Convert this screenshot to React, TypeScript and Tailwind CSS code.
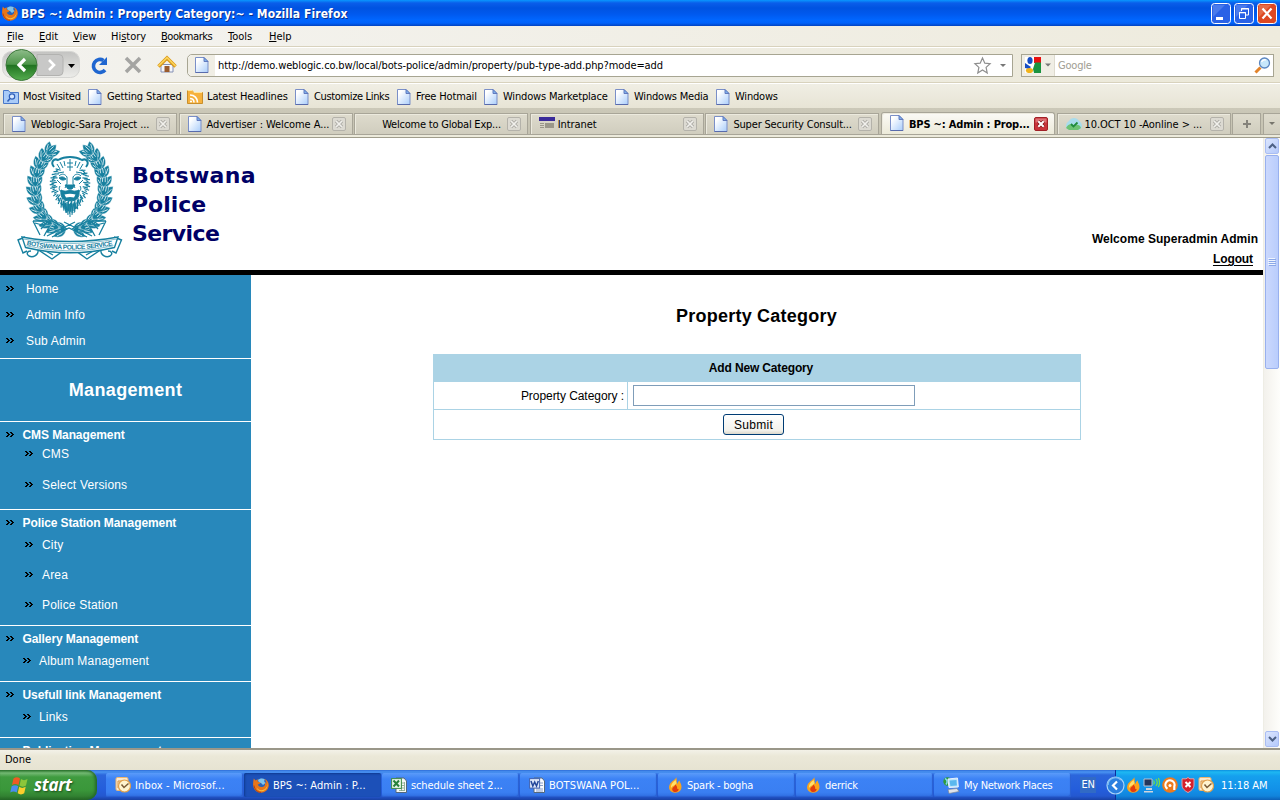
import React from 'react';

type Kids = { children?: React.ReactNode };

const tahoma = "font-['DejaVu_Sans_Condensed','DejaVu_Sans',sans-serif]";

/* ---------- icons ---------- */

function PageIcon() {
  return (
    <svg className="block shrink-0" width="14" height="17" viewBox="0 0 14 17">
      <defs>
        <linearGradient id="pg" x1="0" y1="0" x2="1" y2="1">
          <stop offset="0.2" stopColor="#ffffff" />
          <stop offset="1" stopColor="#a9cdfb" />
        </linearGradient>
      </defs>
      <path d="M.5 .5h8.500l4 4v11H.5z" fill="url(#pg)" stroke="#7a8fc8" />
      <path d="M9 .5v4h4z" fill="#7fb2ee" stroke="#5a72b8" strokeWidth=".9" />
      <path d="M.5 15.500h12.600" stroke="#5566a8" strokeWidth=".9" />
    </svg>
  );
}

function FirefoxIcon() {
  return (
    <svg className="block shrink-0" width="16" height="16" viewBox="0 0 16 16">
      <circle cx="8.400" cy="7" r="6" fill="#2a63b8" />
      <path d="M5 3c2-2 5-2 7-.5l-1 1.500 1.500 2L10 8 8 6 6 6z" fill="#7fc4ee" />
      <path d="M.8 1.500 2.500 3.500 4.600 2.200 4.800 4.800 7.600 5.600 6.400 7 4.800 7.600C5.500 10 8 10.800 10.800 9.400c1.400-.8 1.600-2.600.9-4.200 1 .4 1.400 1 1.600 1.800.2-1.900-.5-3.600-2-5C14 2.800 16 5.400 15.800 8.600 15.400 13 12 15.800 8 15.800S.4 12.700.1 8C0 5.800.3 3.500.8 1.500z" fill="#e8751a" />
      <path d="M13.600 4c1.500 3.500.6 7-2.600 8.600-3 1.300-6 .3-7.500-2 1 3.200 4 4.300 6.800 3.400C14.500 12.600 15.500 8 13.600 4z" fill="#f9c23c" />
      <path d="M1 8.500C1.500 12.500 4.500 15.300 8 15.400" stroke="#b8400c" fill="none" />
    </svg>
  );
}

function FlameIcon() {
  return (
    <svg className="block shrink-0" width="16" height="16" viewBox="0 0 16 16">
      <path d="M9 0C9.500 2.500 4 4 2.500 8 1 12 3.500 15.600 8 15.700c4.500 0 7-3.200 6.400-7C14 6 12.500 5.500 12.800 3.500 11 4.500 10.500 6 10.600 7 9 5.500 10.500 2.500 9 0z" fill="#fba31c" />
      <path d="M8.500 3C5 6 3.500 8 4 11c2-3 5-3 5.500-5z" fill="#ffe06a" />
      <path d="M8 7.500c.6 2-3 2.500-2.800 5C5.500 14.500 7 15 8.300 15c2.200 0 3.600-1.400 3.300-3.300-.8.400-1.200.3-1.500-.2C10.500 10 9.500 8.500 8 7.500z" fill="#e23c0e" />
    </svg>
  );
}

function OutlookIcon() {
  return (
    <svg className="block shrink-0" width="16" height="16" viewBox="0 0 16 16">
      <rect x="1" y=".5" width="12" height="13" rx="1.500" fill="#fbe9cf" stroke="#f2b66c" />
      <path d="M3 4h8M3 11V4" stroke="#d89240" fill="none" />
      <circle cx="9.500" cy="9" r="6" fill="#fff3cf" stroke="#e0a04c" strokeWidth="1.200" />
      <path d="M6.500 7.500 9 10.500l4.500-4" stroke="#7a5a36" strokeWidth="1.500" fill="none" />
    </svg>
  );
}

function ExcelIcon() {
  return (
    <svg className="block shrink-0" width="16" height="16" viewBox="0 0 16 16">
      <path d="M5 1h8l2.500 3v11.500H5z" fill="#f5f8f5" stroke="#54687c" />
      <path d="M8 6h5M8 8.500h5M8 11h5M8 13.500h5M10.500 5v9M13.500 5v9" stroke="#7ea084" strokeWidth=".8" />
      <rect x=".6" y="1.600" width="9.800" height="9.800" fill="#e9f6e9" stroke="#408b48" />
      <path d="M2.500 3.500 8 9.500M8 3.500l-5.500 6" stroke="#26813a" strokeWidth="2" />
    </svg>
  );
}

function WordIcon() {
  return (
    <svg className="block shrink-0" width="16" height="16" viewBox="0 0 16 16">
      <path d="M5 1h8l2.500 3v11.500H5z" fill="#f8faff" stroke="#54687c" />
      <path d="M11 6h3M11 8.500h3M7 12h7M7 14h7" stroke="#8aa0c8" />
      <rect x=".6" y="1.600" width="10" height="9.500" fill="#dfe8fa" stroke="#4163b0" />
      <path d="M2 4l1.800 5L5.700 5l1.800 4L9.300 4" stroke="#24489a" strokeWidth="1.500" fill="none" />
    </svg>
  );
}

function NetworkIcon() {
  return (
    <svg className="block shrink-0" width="17" height="17" viewBox="0 0 17 17">
      <circle cx="4.500" cy="4.500" r="4.200" fill="#2f9a3c" />
      <path d="M2 1.500c2 1 3 3 1 6" stroke="#7fd3f3" strokeWidth="1.500" fill="none" />
      <path d="M5 2l9.500-1 .8 9L6 10.500z" fill="#bfe6fb" stroke="#e8f2ff" />
      <path d="M6.500 3.500 13.500 3l.4 5.500-6.500.5z" fill="#5bb8ee" />
      <path d="M5 12.500 14 11.500l2 3-10 2z" fill="#dfe3ea" stroke="#7d8796" strokeWidth=".7" />
    </svg>
  );
}

function CloseTab({ active }: { active?: boolean }) {
  return active ? (
    <svg className="block shrink-0" width="14" height="14" viewBox="0 0 14 14">
      <rect x=".5" y=".5" width="13" height="13" rx="1.500" fill="#c9343a" stroke="#a02026" />
      <path d="M1.500 1.500h11v4h-11z" fill="#e58a8c" opacity=".7" />
      <path d="M4.300 4.300l5.400 5.400M9.700 4.300 4.300 9.700" stroke="#7c1014" strokeWidth="3.400" />
      <path d="M4.300 4.300l5.400 5.400M9.700 4.300 4.300 9.700" stroke="#fff" strokeWidth="2" />
    </svg>
  ) : (
    <svg className="block shrink-0" width="14" height="14" viewBox="0 0 14 14">
      <rect x=".5" y=".5" width="13" height="13" rx="1.500" fill="#dcdad2" stroke="#b4b2aa" />
      <path d="M4 4l6 6M10 4l-6 6" stroke="#aeaca6" strokeWidth="3.200" />
      <path d="M4 4l6 6M10 4l-6 6" stroke="#f1f0ec" strokeWidth="1.700" />
    </svg>
  );
}

function Chevrons() {
  return (
    <svg className="block shrink-0" width="9" height="6" viewBox="0 0 9 6">
      <path d="M0 0h2v1h1v1h1v1h-1v1h-1v1h-2v-1h1v-1h1v-1h-1v-1h-1zM4 0h2v1h1v1h1v1h-1v1h-1v1h-2v-1h1v-1h1v-1h-1v-1h-1z" fill="#000" />
    </svg>
  );
}

/* ---------- crest ---------- */

const teal = '#17809f';

function Crest() {
  const leaves: { x: number; y: number; r: number }[] = [];
  for (let a = 96; a <= 238; a += 12) {
    const rad = (a * Math.PI) / 180;
    const x = 69.5 + Math.cos(rad) * 34;
    const y = 187 + Math.sin(rad) * 43;
    leaves.push({ x, y, r: a + 90 - 36 });
    leaves.push({ x, y, r: a + 90 + 26 });
    leaves.push({ x, y, r: a + 90 - 5 });
  }
  const branch = leaves.map((l, i) => (
    <g key={i} transform={`translate(${l.x} ${l.y}) rotate(${l.r})`}>
      <path d="M0 0C4-5 9-4.600 14 0 9 4.600 4 5 0 0z" fill={teal} stroke="#fff" strokeWidth=".4" />
      <path d="M5-1.300 11-.8M5 1.500 9 1.600" stroke="#e4f2f6" strokeWidth=".8" />
    </g>
  ));
  const mane = Array.from({ length: 58 }, (_, i) => {
    const t = (i / 57) * Math.PI * 1.5 - Math.PI * 0.25;
    const c = Math.cos(t);
    const s = Math.sin(t);
    const inner = 13 + (i % 3) * 1.4;
    const drop = s > 0 ? s * s * 12 : 0;
    const outer = 18.5 + (i % 2) * 1.8 - drop * 0.3;
    return `M${70 + c * inner} ${183 + s * (inner + 5)}L${70 + c * outer} ${184 + s * (outer + 1 + drop)}`;
  }).join('');
  return (
    <svg className="block shrink-0" width="112" height="124" viewBox="14 140 112 124">
      <g>{branch}</g>
      <g transform="translate(139 0) scale(-1 1)">{branch}</g>
      <g stroke={teal} fill="none">
        <path d="M70 158c13 0 20 8 20 21 0 18-9 30-20 40-11-10-20-22-20-40 0-13 7-21 20-21z" fill="#fff" stroke="none" />
        <path d="M54 167c-4-5 0-9 4-7 7-4 17-4 24 0 4-2 8 2 4 7" strokeWidth="2" />
        <path d={mane} strokeWidth="1.200" />
        <path d="M57 164l3 5M60 162l3 6M64 161l1 5M76 161l-1 5M80 162l-3 6M83 164l-3 5M70 159v12M67 163h6M67 167h6" />
        <path d="M59 176c3-3 6-2 8 1v7l-2 4M81 176c-3-3-6-2-8 1v7l2 4M60 186c-2 3 0 6 3 6M80 186c2 3 0 6-3 6M57 180l4 4M83 180l-4 4M58 173l6-1M82 173l-6-1" />
        <path d="M59 178c3-2 5-1 7 1-3 2-5 1-7-1zM81 178c-3-2-5-1-7 1 3 2 5 1 7-1zM65 185h10l-3 4h-4zM61 190c5 2 5 1 9 0 4 1 4 2 9 0 1 8-3 11-9 11s-10-3-9-11z" fill={teal} />
        <path d="M64.500 194.500q5.500-1.500 11 0l-1.500 3q-4-1-8 0z" fill="#fff" stroke="none" />
        <path d="M61 200l3 9M64 203l2 10M67 204l1 11M70 204v13M73 204l-1 11M76 203l-2 10M79 200l-3 9" />
      </g>
      <g stroke={teal} strokeWidth="1.300" fill="none">
        <path d="M33 221h19l15 8M33 221l7 14M35 223l14 4-5 9M106 221H88l-16 8M106 221l-7 14M104 223l-14 4 5 9M47 236l28-14M92 236 64 222M52 237l17-9 18 9M41 229l7-8M98 229l-7-8" />
      </g>
      <g stroke={teal} strokeWidth="1.400" fill="#fff">
        <path d="M37 249l15 10 11-8M102 249l-15 10-11-8M42 249l11 6M97 249l-11 6" />
        <path d="M24 249c2-5 13-5 14 1 1 5-5 8-9 6-3-2-2-5 2-5M115 249c-2-5-13-5-14 1-1 5 5 8 9 6 3-2 2-5-2-5" />
        <path d="M25 237l-7 3 5 13 4-2M114 237l7.500 3-5.500 13-4-2" />
        <path d="M22 237Q70 246 118 237L114.500 247.500Q70 258 25.500 247.500Z" />
        <path d="M23 239Q70 248.300 117 239M26 245.800Q70 256 113.500 245.800" fill="none" strokeWidth=".5" />
      </g>
      <path id="ribbon" d="M25.500 244.700Q70 254.200 114.500 244.700" fill="none" />
      <text className="font-['Liberation_Sans',sans-serif] font-bold" fontSize="6.600" fill={teal}>
        <textPath href="#ribbon" startOffset="1" textLength="87" lengthAdjust="spacing">BOTSWANA POLICE SERVICE</textPath>
      </text>
    </svg>
  );
}

/* ---------- browser chrome ---------- */

function TitleBar() {
  return (
    <div className="flex h-[26px] shrink-0 items-center bg-[linear-gradient(#0997ff_0px,#0a5eea_3px,#0053e1_8px,#0059ee_14px,#0066ff_20px,#0162fb_23px,#0243c0_26px)] pl-[2px] pr-[3px]">
      <FirefoxIcon />
      <span className="ml-[3px] mt-px whitespace-nowrap font-['DejaVu_Sans_Condensed',sans-serif] text-[12px] font-bold tracking-[0.080px] text-white [text-shadow:1px_1px_#0a2f8c]">
        BPS ~: Admin : Property Category:~ - Mozilla Firefox
      </span>
      <div className="ml-auto flex gap-[3px]">
        <svg width="20" height="21" viewBox="0 0 20 21">
          <rect x=".5" y=".5" width="19" height="20" rx="3" fill="#2a62e6" stroke="#fff" />
          <path d="M2 2h12L2 14z" fill="#7ba2f5" opacity=".4" />
          <path d="M5 14h7v3H5z" fill="#fff" />
        </svg>
        <svg width="20" height="21" viewBox="0 0 20 21">
          <rect x=".5" y=".5" width="19" height="20" rx="3" fill="#2a62e6" stroke="#fff" />
          <path d="M2 2h12L2 14z" fill="#7ba2f5" opacity=".4" />
          <path d="M7.500 8V5.500h7v6.500H12M7 6h8M5.500 9.500h6v6h-6zM5 9.800h7" stroke="#fff" fill="none" />
        </svg>
        <svg width="20" height="21" viewBox="0 0 20 21">
          <rect x=".5" y=".5" width="19" height="20" rx="3" fill="#dd4822" stroke="#fff" />
          <path d="M2 2h12L2 14z" fill="#f0a080" opacity=".4" />
          <path d="M5.500 5.500l9 10M14.500 5.500l-9 10" stroke="#fff" strokeWidth="2.200" />
        </svg>
      </div>
    </div>
  );
}

const menus = [
  { u: 'F', r: 'ile', c: 'w-[32px]' },
  { u: 'E', r: 'dit', c: 'w-[34px]' },
  { u: 'V', r: 'iew', c: 'w-[38px]' },
  { p: 'Hi', u: 's', r: 'tory', c: 'w-[50px]' },
  { u: 'B', r: 'ookmarks', c: 'w-[67px] tracking-[-0.450px]' },
  { u: 'T', r: 'ools', c: 'w-[41px]' },
  { u: 'H', r: 'elp', c: 'w-[40px]' },
];

function MenuBar() {
  return (
    <div className="flex h-[21px] shrink-0 items-center border-b border-[#d8d2bd] bg-[linear-gradient(90deg,#f4f3f0,#eeebdd)] pl-[7px] pt-[2px] text-[11px]">
      {menus.map((m) => (
        <span key={m.u + m.r} className={`whitespace-nowrap ${m.c}`}>
          {m.p}
          <u className="underline-offset-1">{m.u}</u>
          {m.r}
        </span>
      ))}
    </div>
  );
}

function NavBar() {
  return (
    <div className="flex h-[36px] shrink-0 items-center border-b border-t border-b-[#d8d2bd] border-t-white bg-[linear-gradient(90deg,#f3f2ee,#ebe8d8)]">
      <svg className="block shrink-0" width="184" height="34" viewBox="0 48 184 34">
        <defs>
          <linearGradient id="gr" x1="0" y1="0" x2="0" y2="1">
            <stop offset="0" stopColor="#8fbd8b" />
            <stop offset=".48" stopColor="#4d9549" />
            <stop offset=".5" stopColor="#1f7220" />
            <stop offset="1" stopColor="#55ad4f" />
          </linearGradient>
          <linearGradient id="pill" x1="0" y1="0" x2="0" y2="1">
            <stop offset="0" stopColor="#c3c3c1" />
            <stop offset="1" stopColor="#ecece9" />
          </linearGradient>
        </defs>
        <rect x="2.500" y="51.500" width="77" height="26" rx="9" fill="url(#pill)" stroke="#d6d6d3" />
        <path d="M37 54.500h22q4 0 4 4v13q0 4-4 4H37z" fill="#c8c8c7" stroke="#b2b2b0" />
        <path d="M49 60l5 5-5 5" stroke="#fff" strokeWidth="2.600" fill="none" />
        <path d="M68 64h7l-3.500 4z" fill="#000" />
        <circle cx="21.500" cy="65" r="15.500" fill="url(#gr)" stroke="#3f7a3d" strokeWidth="1" />
        <path d="M25 59l-6 6 6 6" stroke="#fff" strokeWidth="3.200" fill="none" />
        <path d="M105 70a6.500 6.500 0 1 1-1.500-9.500" stroke="#1f66d0" strokeWidth="3.600" fill="none" />
        <path d="M107 57v8h-8z" fill="#1f66d0" />
        <path d="M126 58l14 14M140 58l-14 14" stroke="#a4a4a2" strokeWidth="3.500" />
        <path d="M161 64.500h12V72h-12z" fill="#f5f6fb" stroke="#8490b4" />
        <path d="M164.500 66h5v6h-5z" fill="#9a5b2c" />
        <path d="M158.500 66.500l8.500-8.500 8.500 8.500" stroke="#d9981a" strokeWidth="3.600" fill="none" />
        <path d="M158.500 66l8.500-8.300 8.500 8.300" stroke="#fbd45b" strokeWidth="1.700" fill="none" />
      </svg>
      <div className="ml-[3px] flex h-[23px] w-[826px] shrink-0 items-center rounded-l-[5px] border border-[#a7a592] bg-white">
        <div className="flex h-full w-[27px] items-center rounded-l-[5px] bg-[#f0eee5] pl-[7px]"><PageIcon /></div>
        <span className="ml-[3px] mt-[3px] whitespace-nowrap text-[11px] tracking-[-0.1px]">http://demo.weblogic.co.bw/local/bots-police/admin/property/pub-type-add.php?mode=add</span>
        <svg className="ml-auto mr-[3px] shrink-0" width="36" height="19" viewBox="0 0 36 19">
          <path d="M9.500 2l2.300 5.200 5.300.5-4 3.700 1.100 5.500-4.700-2.900-4.700 2.900 1.100-5.500-4-3.700 5.300-.5z" fill="#fff" stroke="#8e8e8e" strokeWidth="1.200" />
          <path d="M27 8h6l-3 3z" fill="#777" />
        </svg>
      </div>
      <div className="ml-[8px] flex h-[23px] w-[253px] shrink-0 items-center border border-[#a7a592] bg-white">
        <div className="flex h-full w-[33px] items-center border-r border-[#dedbcf] bg-[#f0eee5] pl-[3px]">
          <svg width="26" height="16" viewBox="0 0 26 16">
            <path d="M0 0h16v16H0z" fill="#fff" />
            <path d="M9 0h7v6h-7z" fill="#e8110f" />
            <path d="M10 5.500h6V16H9l-1-4z" fill="#1a9440" />
            <ellipse cx="5" cy="3.500" rx="2.600" ry="3.500" fill="#174ec4" />
            <path d="M0 6l6 4-2 2-4-1z" fill="#174ec4" />
            <ellipse cx="4.500" cy="13.500" rx="3.600" ry="2.600" fill="#f1b31a" />
            <path d="M20 6.500h6l-3 3z" fill="#777" />
          </svg>
        </div>
        <span className="ml-[3px] mt-[3px] text-[11px] tracking-[-0.2px] text-[#a09d92]">Google</span>
        <svg className="ml-auto mr-[2px]" width="17" height="17" viewBox="0 0 17 17">
          <path d="M6.500 10.500 1.500 15.500" stroke="#e2832a" strokeWidth="3" />
          <circle cx="10.500" cy="6" r="5" fill="#c7e7fb" stroke="#5b86c0" strokeWidth="1.300" />
          <path d="M7.500 5c1-2 3-2.500 4.500-2" stroke="#fff" strokeWidth="1.300" fill="none" />
        </svg>
      </div>
    </div>
  );
}

const bookmarks = [
  { t: 'Most Visited', c: 'w-[84px] tracking-[-0.200px]', k: 'visited' },
  { t: 'Getting Started', c: 'w-[100px] tracking-[-0.120px]', k: 'page' },
  { t: 'Latest Headlines', c: 'w-[107px] tracking-[-0.120px]', k: 'feed' },
  { t: 'Customize Links', c: 'w-[102px] tracking-[-0.350px]', k: 'page' },
  { t: 'Free Hotmail', c: 'w-[87px] tracking-[-0.150px]', k: 'page' },
  { t: 'Windows Marketplace', c: 'w-[131px] tracking-[-0.170px]', k: 'page' },
  { t: 'Windows Media', c: 'w-[101px] tracking-[-0.200px]', k: 'page' },
  { t: 'Windows', c: 'w-[80px] tracking-[-0.200px]', k: 'page' },
];

function FolderIcon({ kind }: { kind: string }) {
  const feed = kind === 'feed';
  return (
    <svg className="block shrink-0" width="16" height="16" viewBox="0 0 16 16">
      <path d="M.5 1.500h5l1.500 2h8.500v11H.5z" fill={feed ? '#f6b13c' : '#a9cbf8'} stroke={feed ? '#c98f2b' : '#4a78c8'} />
      {feed ? (
        <>
          <path d="M3 6c4.500 0 7.500 3 7.500 7.500M3 9.500c2.500 0 4 1.500 4 4" stroke="#fff" strokeWidth="1.600" fill="none" />
          <path d="M.5 1.500h5l1.500 2h8" stroke="#ffe6a0" fill="none" />
          <circle cx="4" cy="12.500" r="1.100" fill="#fff" />
        </>
      ) : (
        <>
          <circle cx="9" cy="7.500" r="2.700" fill="#d7e8ff" stroke="#2f5fb8" strokeWidth="1.200" />
          <path d="M7 9.500l-2.500 3" stroke="#2f5fb8" strokeWidth="1.500" />
        </>
      )}
    </svg>
  );
}

function BookmarksBar() {
  return (
    <div className="flex h-[25px] shrink-0 items-center border-t border-white bg-[linear-gradient(#f0eee4,#e7e4d5)] pl-[3px] pt-[2px] text-[11px]">
      {bookmarks.map((b) => (
        <div key={b.t} className={`flex shrink-0 items-center whitespace-nowrap ${b.c}`}>
          {b.k === 'page' ? (
            <><span className="ml-[1px]"><PageIcon /></span><span className="ml-[5px] mt-px">{b.t}</span></>
          ) : (
            <><FolderIcon kind={b.k} /><span className="ml-[4px] mt-px">{b.t}</span></>
          )}
        </div>
      ))}
    </div>
  );
}

function Tab({ children, icon, active }: Kids & { icon?: React.ReactNode; active?: boolean }) {
  const look = active
    ? 'mt-0 rounded-t-[3px] bg-[linear-gradient(#fbfaf6,#ecead9)] font-bold'
    : 'mt-[1px] bg-[linear-gradient(#dedbcd,#d0cdbe)]';
  return (
    <div className={`flex w-[174px] shrink-0 items-center border border-b-0 border-[#a8a598] pl-[8px] pr-[6px] shadow-[inset_1px_1px_#eceade] ${look}`}>
      <span className="w-[17px]">{icon}</span>
      <span className={`ml-[2px] whitespace-nowrap ${active ? 'mt-[3px]' : 'mt-[2px]'}`}>{children}</span>
      <span className={`ml-auto ${active ? 'mt-px' : ''}`}><CloseTab active={active} /></span>
    </div>
  );
}

function TabStrip() {
  return (
    <div className="flex h-[30px] shrink-0 flex-col border-b border-[#a09d8c] bg-[linear-gradient(#cbc8b8,#c5c2b1)]">
      <div className="flex min-h-0 flex-1 gap-[1.600px] pl-[3px] pt-[4px] text-[11px] tracking-[-0.080px]">
        <Tab icon={<PageIcon />}>Weblogic-Sara Project ...</Tab>
        <Tab icon={<PageIcon />}>Advertiser : Welcome A...</Tab>
        <Tab><span className="tracking-[-0.220px]">Welcome to Global Exp...</span></Tab>
        <Tab icon={
          <svg width="16" height="14" viewBox="0 0 16 14">
            <path d="M0 0h16v4H0z" fill="#3a2b9a" />
            <path d="M1 6h4v1H1zM1 8h4v1H1zM1 10h4v1H1zM6 6h9v5H6z" fill="#9a978a" />
          </svg>
        }>Intranet</Tab>
        <Tab icon={<PageIcon />}><span className="tracking-[-0.170px]">Super Security Consult...</span></Tab>
        <Tab active icon={<PageIcon />}><span className="tracking-[-0.180px]">BPS ~: Admin : Prop...</span></Tab>
        <Tab icon={
          <svg width="16" height="14" viewBox="0 0 16 14">
            <path d="M0 9c0-2 1-4 3-5C5 0 11 0 13 4c2 1 3 3 3 5s-2 4-4 4H4c-2 0-4-2-4-4z" fill="#a8dcec" />
            <path d="M0 11c2-4 5-5 8-2 2-2 6-2 7 2l-3 2H3z" fill="#6cc274" />
            <path d="M5 7l2.500 2.500 4-4" stroke="#1f8b3c" strokeWidth="1.800" fill="none" />
          </svg>
        }>10.OCT 10 -Aonline &gt; ...</Tab>
        <div className="mt-[1px] flex w-[29px] shrink-0 items-center justify-center border border-b-0 border-[#a8a598] bg-[linear-gradient(#dedbcd,#d0cdbe)]">
          <svg width="8" height="8" viewBox="0 0 8 8"><path d="M3 0h2v3h3v2H5v3H3V5H0V3h3z" fill="#85837b" /></svg>
        </div>
        <div className="mt-[1px] flex flex-1 items-center justify-center border border-b-0 border-r-0 border-[#a8a598] bg-[linear-gradient(#dedbcd,#d0cdbe)]">
          <svg width="6" height="4" viewBox="0 0 6 4"><path d="M0 0h6L3 3z" fill="#77756c" /></svg>
        </div>
      </div>
      <div className="h-[3px] shrink-0 border-t border-[#a8a598] bg-[#eceadb]" />
    </div>
  );
}

/* ---------- page ---------- */

function Row({ children, h, indent, bold }: Kids & { h: string; indent: string; bold?: boolean }) {
  return (
    <div className={`flex shrink-0 items-center whitespace-nowrap ${h} ${indent} ${bold ? 'font-bold tracking-[-0.090px]' : 'tracking-[0.170px]'}`}>
      <Chevrons />
      {children}
    </div>
  );
}

function Sidebar() {
  const top = 'pl-[6px] gap-[11px]';
  const head = 'pl-[6px] gap-[7.500px]';
  const sub = 'pl-[25px] gap-[8px]';
  const sub2 = 'pl-[23px] gap-[7px]';
  return (
    <div className="flex w-[251px] shrink-0 flex-col overflow-hidden bg-[#2888bb] text-[12px] text-white">
      <div className="flex h-[84px] shrink-0 flex-col border-b border-white pt-px">
        <Row h="h-[26px]" indent={top}>Home</Row>
        <Row h="h-[26px]" indent={top}>Admin Info</Row>
        <Row h="h-[26px]" indent={top}>Sub Admin</Row>
      </div>
      <div className="flex h-[63px] shrink-0 items-center justify-center border-b border-white text-[18px] font-bold tracking-[0.350px]">Management</div>
      <div className="flex h-[88px] shrink-0 flex-col border-b border-white pt-[3px]">
        <Row h="h-[20px]" indent={head} bold>CMS Management</Row>
        <Row h="h-[18px]" indent={sub}>CMS</Row>
        <Row h="h-[44px]" indent={sub}>Select Versions</Row>
      </div>
      <div className="flex h-[116px] shrink-0 flex-col border-b border-white pt-[3px]">
        <Row h="h-[20px]" indent={head} bold>Police Station Management</Row>
        <Row h="h-[24px]" indent={sub}>City</Row>
        <Row h="h-[36px]" indent={sub}>Area</Row>
        <Row h="h-[24px]" indent={sub}>Police Station</Row>
      </div>
      <div className="flex h-[56px] shrink-0 flex-col border-b border-white pt-[3px]">
        <Row h="h-[20px]" indent={head} bold>Gallery Management</Row>
        <Row h="h-[24px]" indent={sub2}>Album Management</Row>
      </div>
      <div className="flex h-[56px] shrink-0 flex-col border-b border-white pt-[3px]">
        <Row h="h-[20px]" indent={head} bold>Usefull link Management</Row>
        <Row h="h-[24px]" indent={sub2}>Links</Row>
      </div>
      <div className="h-[10px] shrink-0 overflow-hidden pl-[22.500px] pt-[6px] font-bold leading-[15px] tracking-[-0.090px]">Publication Management</div>
    </div>
  );
}

function WebPage() {
  return (
    <div className="flex w-[1263px] shrink-0 flex-col overflow-hidden bg-white font-['Liberation_Sans',Arial,sans-serif] text-[12px] text-black">
      <div className="flex h-[137px] shrink-0 border-b-[5px] border-black">
        <div className="pl-[14px] pt-[2px]"><Crest /></div>
        <div className="ml-[6px] flex flex-col pt-[23px] font-['DejaVu_Sans',sans-serif] text-[22px] font-bold leading-[29px] text-[#000066]">
          <span className="tracking-[0.350px]">Botswana</span>
          <span>Police</span>
          <span className="tracking-[-0.600px]">Service</span>
        </div>
        <div className="ml-auto flex flex-col items-end pr-[5px] pt-[91px] font-bold leading-[20px]">
          <span className="tracking-[0.030px]">Welcome Superadmin Admin</span>
          <span className="mr-[5px] tracking-[-0.100px] underline underline-offset-2">Logout</span>
        </div>
      </div>
      <div className="flex min-h-0 flex-1">
        <Sidebar />
        <div className="flex min-w-0 flex-1 flex-col items-center">
          <h1 className="mt-[29px] h-[50px] pr-px text-[18px] font-bold leading-[24px] tracking-[0.220px]">Property Category</h1>
          <div className="flex w-[648px] flex-col border border-[#abd3e5]">
            <div className="flex h-[27px] items-center justify-center bg-[#abd3e5] pb-px pl-[8px] font-bold tracking-[-0.150px]">Add New Category</div>
            <div className="flex h-[28px] border-b border-[#abd3e5]">
              <div className="flex w-[194px] items-center justify-end border-r border-[#abd3e5] pr-[3px] tracking-[-0.050px]">Property Category :</div>
              <div className="flex items-center pl-[5px]">
                <input className="h-[21px] w-[282px] border border-[#7f9db9] bg-white outline-none" />
              </div>
            </div>
            <div className="flex h-[29px] items-center justify-center pr-[7px]">
              <button className="h-[21px] w-[61px] rounded-[3px] border border-[#003c74] bg-[linear-gradient(#ffffff,#f3f2ec_80%,#dcd8cc)] text-[12px] leading-[18px] tracking-[0.300px]">Submit</button>
            </div>
          </div>
        </div>
      </div>
    </div>
  );
}

function ScrollArrow({ down }: { down?: boolean }) {
  return (
    <div className="flex h-[16px] w-[14px] shrink-0 items-center justify-center rounded-[2px] border border-[#a9bdf3] bg-[linear-gradient(135deg,#dce6fe,#b4c9fb)]">
      <svg width="9" height="6" viewBox="0 0 9 6">
        <path d={down ? 'M1 1l3.500 3.500L8 1' : 'M1 5l3.500-3.500L8 5'} stroke="#4d6185" strokeWidth="2" fill="none" />
      </svg>
    </div>
  );
}

function Scrollbar() {
  return (
    <div className="flex w-[17px] shrink-0 flex-col items-center border-l border-[#eeede5] bg-[linear-gradient(90deg,#f3f1ec,#fefefb)] pb-px">
      <ScrollArrow />
      <div className="mt-px flex h-[214px] w-[14px] flex-col items-center justify-center gap-px rounded-[2px] border border-[#98b0ee] bg-[linear-gradient(90deg,#cbd8fd,#b9cdfc)]">
        {[0, 1, 2, 3].map((i) => (
          <div key={i} className="h-px w-[7px] bg-[#8ba8e8] shadow-[-1px_-1px_#eef4fe]" />
        ))}
      </div>
      <div className="mt-auto"><ScrollArrow down /></div>
    </div>
  );
}

/* ---------- taskbar ---------- */

function Task({ icon, children, active }: Kids & { icon: React.ReactNode; active?: boolean }) {
  const look = active
    ? 'bg-[#1c50b8] shadow-[inset_1px_1px_2px_#0f3a92]'
    : 'bg-[linear-gradient(#5a9bfa,#3c82f5_25%,#3a7ff2_80%,#2f6ee0)] shadow-[inset_-1px_-1px_1px_#2a5fd0]';
  return (
    <div className={`flex h-[24px] w-[137px] shrink-0 items-center rounded-[2px] pl-[9px] text-[11px] text-white ${look}`}>
      {icon}
      <span className={`ml-[4px] whitespace-nowrap ${active ? 'mt-[3px]' : 'mt-[2px]'}`}>{children}</span>
    </div>
  );
}

function Taskbar() {
  return (
    <div className="flex h-[30px] shrink-0 bg-[linear-gradient(#2e6cd8_0px,#4a94f2_2px,#2b66dc_5px,#245ddb_20px,#2458d0_26px,#1941a5_30px)]">
      <div className="flex h-[30px] w-[97px] shrink-0 items-center rounded-r-[10px] bg-[linear-gradient(#2f7a30_0px,#73b973_3px,#3f9b3f_7px,#3a973a_20px,#328232_26px,#246624_30px)] pl-[10px] shadow-[inset_-2px_0_3px_#24682a]">
        <svg className="shrink-0" width="20" height="19" viewBox="0 0 20 19">
          <path d="M3.500 2.500c2-1.600 4.500-1.600 6.500 0L8.500 9c-2-1.500-4.500-1.500-6.500 0z" fill="#ee5a24" />
          <path d="M11 3c2 1.500 4 1.500 6.500 0L16 9.500c-2 1.500-4.500 1.500-6.500 0z" fill="#8cc63a" />
          <path d="M1.700 10.300c2-1.500 4.500-1.500 6.500 0L6.700 16.500c-2-1.500-4.500-1.500-6.500 0z" fill="#4b8df0" />
          <path d="M9.200 10.800c2 1.500 4 1.500 6.500 0l-1.500 6.500c-2 1.500-4.500 1.500-6.500 0z" fill="#fbce2c" />
        </svg>
        <span className="ml-[4px] font-['Open_Sans',sans-serif] text-[17px] font-bold italic leading-[20px] tracking-[-0.300px] text-white [text-shadow:1px_1px_2px_#1b4d1b]">start</span>
      </div>
      <div className="ml-[9px] mt-[3px] flex gap-px">
        <Task icon={<OutlookIcon />}><span className="tracking-[0.150px]">Inbox - Microsof...</span></Task>
        <Task icon={<FirefoxIcon />} active><span className="tracking-[0.050px]">BPS ~: Admin : P...</span></Task>
        <Task icon={<ExcelIcon />}><span className="tracking-[-0.120px]">schedule sheet 2...</span></Task>
        <Task icon={<WordIcon />}><span className="tracking-[0.120px]">BOTSWANA POL...</span></Task>
        <Task icon={<FlameIcon />}><span className="tracking-[-0.250px]">Spark - bogha</span></Task>
        <Task icon={<FlameIcon />}><span className="tracking-[-0.200px]">derrick</span></Task>
        <Task icon={<NetworkIcon />}><span className="tracking-[-0.300px]">My Network Places</span></Task>
      </div>
      <div className="ml-[9px] mt-[7px] flex h-[16px] w-[16px] items-center justify-center bg-[#316ac5] text-[11px] tracking-[-0.400px] text-white">EN</div>
      <div className="relative ml-auto flex w-[165px] shrink-0 items-center border-l border-[#0d2f9c] bg-[linear-gradient(#0c8ee0_0px,#1eb8f2_2px,#15a0ee_6px,#1290e8_20px,#1184dc_26px,#0c60b8_30px)] pl-[9px] text-white">
        <svg className="absolute -left-[10px] top-[6px]" width="19" height="19" viewBox="0 0 19 19">
          <circle cx="9.500" cy="9.500" r="8.500" fill="#2a7fe0" stroke="#a8d4f8" strokeWidth="1.200" />
          <path d="M2 9a7.500 7.500 0 0 1 13-5" stroke="#7dbdf5" strokeWidth="1.500" fill="none" />
          <path d="M11 5.500l-4 4 4 4" stroke="#fff" strokeWidth="2.200" fill="none" />
        </svg>
        <div className="flex gap-[2px]">
          <FlameIcon />
          <svg width="17" height="16" viewBox="0 0 17 16">
            <path d="M1 2h8v7H1z" fill="#24365c" stroke="#b9c3d4" />
            <path d="M3 11h6v2H3zM1 14h9v1.500H1z" fill="#cfd5de" />
            <path d="M10.500 3.500q1.500 2 0 4M13 2q2.500 3.500 0 7M15.300 1q2.500 4.500 0 9" stroke="#7fe03c" strokeWidth="1.200" fill="none" />
          </svg>
          <svg width="16" height="16" viewBox="0 0 16 16">
            <circle cx="8" cy="8" r="7.800" fill="#ee7a1c" />
            <path d="M5.500 11.800A4.600 4.600 0 1 1 12.300 9.500V13" stroke="#fff" strokeWidth="2.200" fill="none" />
            <circle cx="8" cy="8.500" r="1.500" fill="#fff" />
          </svg>
          <svg width="16" height="16" viewBox="0 0 16 16">
            <path d="M8 .5l2 1.300h4V8c0 3.500-3 6-6 7.500C5 14 2 11.500 2 8V1.800h4z" fill="#d4202c" stroke="#dba4ac" />
            <path d="M5.500 5l5 5M10.500 5l-5 5" stroke="#fff" strokeWidth="2" />
          </svg>
          <OutlookIcon />
        </div>
        <span className="ml-[7px] mt-[2px] whitespace-nowrap text-[11px] tracking-[-0.050px]">11:18 AM</span>
      </div>
    </div>
  );
}

export default function App() {
  return (
    <div className={`flex h-[800px] w-[1280px] flex-col overflow-hidden bg-[#ece9d8] text-black ${tahoma}`}>
      <TitleBar />
      <MenuBar />
      <NavBar />
      <BookmarksBar />
      <TabStrip />
      <div className="flex h-[610px] shrink-0">
        <WebPage />
        <Scrollbar />
      </div>
      <div className="flex h-[22px] shrink-0 items-center border-t-2 border-[#9a9789] bg-[linear-gradient(#f3f1e8,#ebe8d8_30%,#e6e3d2)] pl-[5px] text-[11px]">Done</div>
      <Taskbar />
    </div>
  );
}
